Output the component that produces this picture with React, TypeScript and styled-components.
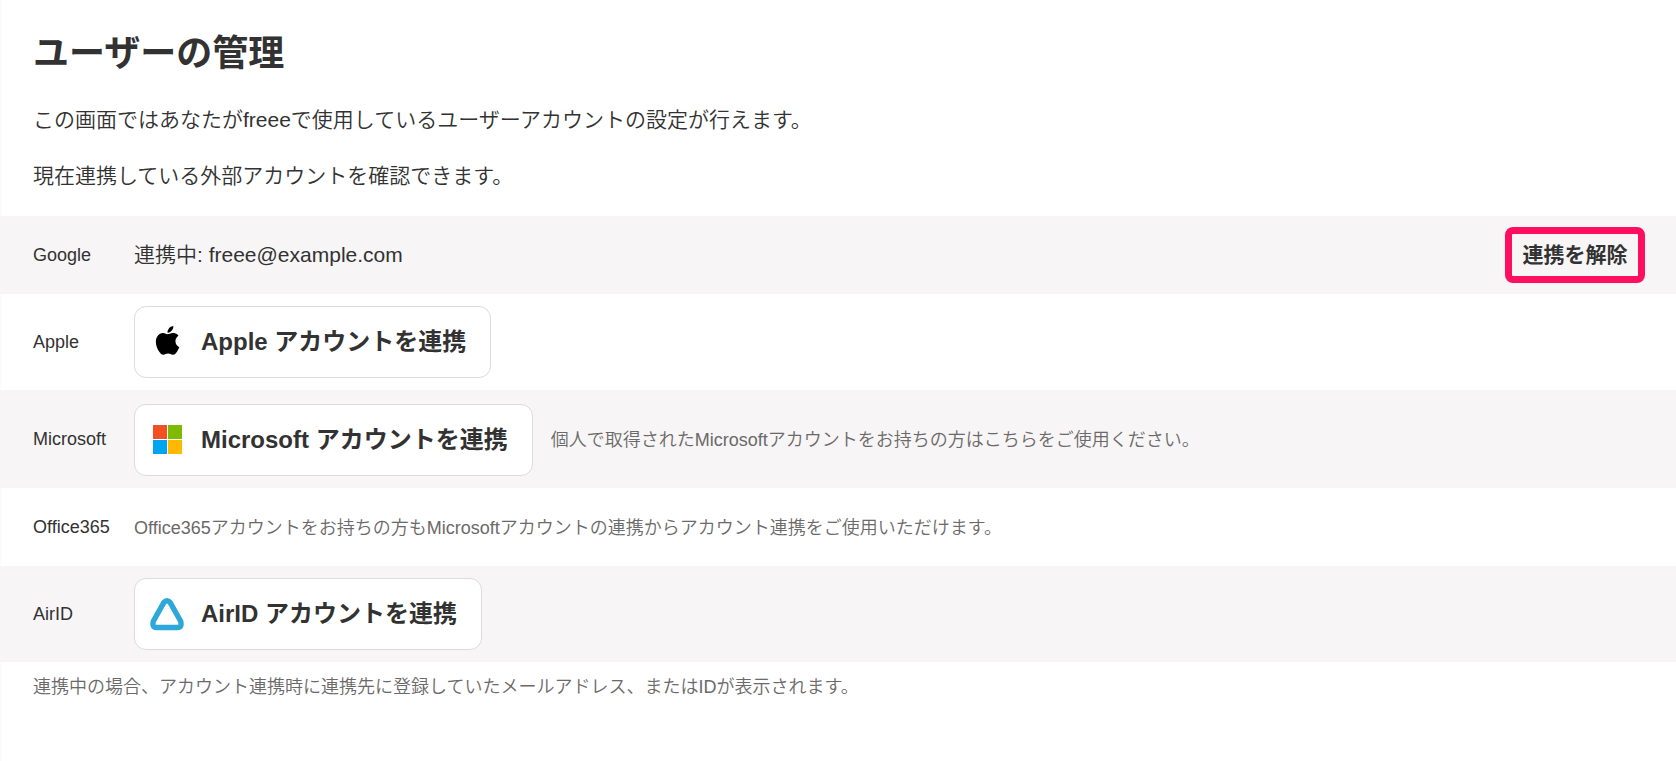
import React from "react";
import styled, { createGlobalStyle } from "styled-components";

const GlobalStyle = createGlobalStyle`
  *, *::before, *::after { box-sizing: border-box; }
  body {
    margin: 0;
    background: #fff;
    color: #323232;
    font-family: "Liberation Sans", "Noto Sans CJK JP", sans-serif;
    font-size: 21px;
    font-weight: 350;
    line-height: 32px;
  }
`;

const Page = styled.main`
  min-height: 100vh;
  box-shadow: inset 1px 0 #fafafa;
`;

const Intro = styled.header`
  display: flex;
  flex-direction: column;
  gap: 24px;
  padding: 28px 33px 24px;
`;

const Title = styled.h1`
  margin: 0;
  font-size: 36px;
  line-height: 52px;
  font-weight: 700;
`;

const Lead = styled.p`
  margin: 0;
`;

const AccountTable = styled.table`
  width: 100%;
  border-collapse: collapse;
`;

const AccountRow = styled.tr`
  height: 78px;

  &:nth-child(odd) {
    background: #f7f5f6;
  }
`;

const Provider = styled.th`
  width: 134px;
  padding: 0 0 0 33px;
  text-align: left;
  font-size: 18px;
  font-weight: 400;
`;

const Detail = styled.td<{ $tall?: boolean }>`
  padding: ${(p) => (p.$tall ? 12 : 10)}px 31px 10px 0;
`;

const DetailContent = styled.div<{ $spread?: boolean }>`
  display: flex;
  align-items: center;
  justify-content: ${(p) => (p.$spread ? "space-between" : "flex-start")};
  gap: 18px;
`;

const Note = styled.span`
  color: #6b6969;
  font-size: 18px;
`;

const Footnote = styled.p`
  margin: 0;
  padding: 9px 33px;
  color: #6b6969;
  font-size: 18px;
`;

const ConnectButton = styled.button`
  display: flex;
  align-items: center;
  gap: 17px;
  height: 72px;
  margin: 2px 0;
  padding: 0 24px 0 15px;
  border: 1px solid #dcdcdc;
  border-radius: 12px;
  background: #fff;
  color: inherit;
  font: inherit;
  font-size: 24px;
  font-weight: 700;
  white-space: nowrap;
  cursor: pointer;
`;

const DisconnectButton = styled.button`
  min-width: 140px;
  height: 56px;
  padding: 0 10px;
  border: 7px solid #ff0f5f;
  border-radius: 8px;
  background: transparent;
  color: inherit;
  font: inherit;
  font-weight: 700;
  white-space: nowrap;
  cursor: pointer;
`;

const Logo = styled.svg`
  flex: none;
  width: 34px;
  height: 34px;
`;

const AppleLogo = () => (
  <Logo viewBox="0 0 34 34" aria-hidden="true">
    <path
      transform="translate(3.2 1) scale(1.2)"
      d="M12.152 6.896c-.948 0-2.415-1.078-3.96-1.04-2.04.027-3.91 1.183-4.961 3.014-2.117 3.675-.546 9.103 1.519 12.09 1.013 1.454 2.208 3.09 3.792 3.039 1.52-.065 2.09-.987 3.935-.987 1.831 0 2.35.987 3.96.948 1.637-.026 2.676-1.48 3.676-2.948 1.156-1.688 1.636-3.325 1.662-3.415-.039-.013-3.182-1.221-3.22-4.857-.026-3.04 2.48-4.494 2.597-4.559-1.429-2.09-3.623-2.324-4.39-2.376-2-.156-3.675 1.09-4.61 1.09zM15.53 3.83c.843-1.012 1.4-2.427 1.245-3.83-1.207.052-2.662.805-3.532 1.818-.78.896-1.454 2.338-1.273 3.714 1.338.104 2.715-.688 3.559-1.701"
    />
  </Logo>
);

const MicrosoftLogo = () => (
  <Logo viewBox="0 0 34 34" aria-hidden="true">
    <path fill="#f25022" d="M3 2h14v14H3z" />
    <path fill="#7fba00" d="M18 2h14v14H18z" />
    <path fill="#00a4ef" d="M3 17h14v14H3z" />
    <path fill="#ffb900" d="M18 17h14v14H18z" />
  </Logo>
);

const AirLogo = () => (
  <Logo viewBox="0 0 34 34" aria-hidden="true">
    <path
      fill="none"
      stroke="#2ea7d9"
      strokeWidth="5.4"
      strokeLinejoin="round"
      d="M13.8 5.6Q17 1.8 20.2 5.6L30.7 24.3Q32.2 30.5 27.5 30.5H6.5Q1.8 30.5 3.3 24.3Z"
    />
  </Logo>
);

export default function App() {
  return (
    <>
      <GlobalStyle />
      <Page>
        <Intro>
          <Title>ユーザーの管理</Title>
          <Lead>この画面ではあなたがfreeeで使用しているユーザーアカウントの設定が行えます。</Lead>
          <Lead>現在連携している外部アカウントを確認できます。</Lead>
        </Intro>
        <AccountTable>
          <tbody>
            <AccountRow>
              <Provider scope="row">Google</Provider>
              <Detail>
                <DetailContent $spread>
                  <span>連携中: freee@example.com</span>
                  <DisconnectButton type="button">連携を解除</DisconnectButton>
                </DetailContent>
              </Detail>
            </AccountRow>
            <AccountRow>
              <Provider scope="row">Apple</Provider>
              <Detail>
                <ConnectButton type="button">
                  <AppleLogo />
                  Apple アカウントを連携
                </ConnectButton>
              </Detail>
            </AccountRow>
            <AccountRow>
              <Provider scope="row">Microsoft</Provider>
              <Detail $tall>
                <DetailContent>
                  <ConnectButton type="button">
                    <MicrosoftLogo />
                    Microsoft アカウントを連携
                  </ConnectButton>
                  <Note>個人で取得されたMicrosoftアカウントをお持ちの方はこちらをご使用ください。</Note>
                </DetailContent>
              </Detail>
            </AccountRow>
            <AccountRow>
              <Provider scope="row">Office365</Provider>
              <Detail>
                <Note>
                  Office365アカウントをお持ちの方もMicrosoftアカウントの連携からアカウント連携をご使用いただけます。
                </Note>
              </Detail>
            </AccountRow>
            <AccountRow>
              <Provider scope="row">AirID</Provider>
              <Detail>
                <ConnectButton type="button">
                  <AirLogo />
                  AirID アカウントを連携
                </ConnectButton>
              </Detail>
            </AccountRow>
          </tbody>
        </AccountTable>
        <Footnote>
          連携中の場合、アカウント連携時に連携先に登録していたメールアドレス、またはIDが表示されます。
        </Footnote>
      </Page>
    </>
  );
}
